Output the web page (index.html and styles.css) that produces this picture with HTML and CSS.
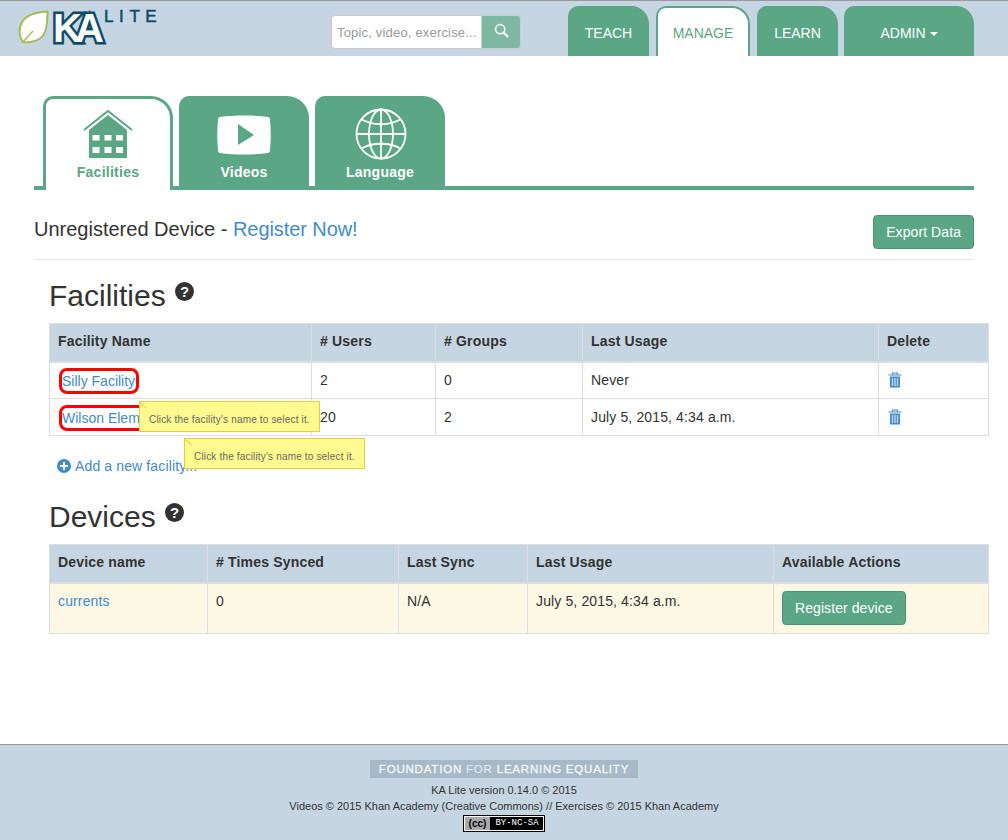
FILE: index.html
```html
<!DOCTYPE html>
<html lang="en">
<head>
    <meta charset="UTF-8">
    <title>Facilities - KA Lite</title>
    <link rel="stylesheet" href="styles.css">
</head>
<body>

    <header class="topbar">
        <a class="logo" href="#">
            <svg class="leaf" width="31" height="34" viewBox="0 0 31 34">
                <path d="M29.5 1.5 C20 2 9 4 4 12 C0 19 1 27 5 32 C12 33 22 31 26 24 C30 17 29 8 29.5 1.5 Z" fill="#fff" stroke="#a4bd5a" stroke-width="2"/>
                <path d="M5 32 L15 21" fill="none" stroke="#a4bd5a" stroke-width="1.5"/>
            </svg>
            <span class="logo-ka">KA</span>
            <span class="logo-lite">LITE</span>
        </a>
        <form class="search">
            <input class="search-input" type="text" placeholder="Topic, video, exercise...">
            <button class="search-btn" type="button">
                <svg width="15" height="15" viewBox="0 0 15 15">
                    <circle cx="6.2" cy="6.2" r="4.6" fill="none" stroke="#fff" stroke-width="1.500"/>
                    <path d="M9.5 9.5 L13.5 13.5" stroke="#fff" stroke-width="2" stroke-linecap="round"/>
                </svg>
            </button>
        </form>
        <nav class="nav">
            <a class="nav-tab nav-teach" href="#">TEACH</a>
            <a class="nav-tab nav-manage active" href="#">MANAGE</a>
            <a class="nav-tab nav-learn" href="#">LEARN</a>
            <a class="nav-tab nav-admin" href="#">ADMIN <span class="caret"></span></a>
        </nav>
    </header>

    <main class="container">
        <div class="subtabs">
            <a class="subtab active" href="#">
                <svg width="50" height="50" viewBox="0 0 50 50">
                    <path d="M1 20 L25 1 L49 20" fill="none" stroke="#5aa685" stroke-width="2"/>
                    <path d="M6 20 L25 5 L44 20 V48 H6 Z" fill="#5aa685"/>
                    <g fill="#fff">
                        <rect x="9.500" y="25" width="7" height="5.500"/>
                        <rect x="21.500" y="25" width="7" height="5.500"/>
                        <rect x="33" y="25" width="7" height="5.500"/>
                        <rect x="9.500" y="37" width="7" height="6"/>
                        <rect x="21.500" y="37" width="7" height="6"/>
                        <rect x="33" y="37" width="7" height="6"/>
                    </g>
                </svg>
                <span>Facilities</span>
            </a>
            <a class="subtab" href="#">
                <svg width="54" height="50" viewBox="0 0 54 50">
                    <path d="M3 7 C18 5 36 5 51 7 C52 7 53 8 53 10 C54 20 54 30 53 40 C53 42 52 43 51 43 C36 45 18 45 3 43 C2 43 1 42 1 40 C0 30 0 20 1 10 C1 8 2 7 3 7 Z" fill="#fff"/>
                    <path d="M21 14 L37 25 L21 35 Z" fill="#5aa685"/>
                </svg>
                <span>Videos</span>
            </a>
            <a class="subtab" href="#">
                <svg class="globe" width="52" height="52" viewBox="0 0 52 52" fill="none" stroke="#fff" stroke-width="1.800">
                    <circle cx="26" cy="26" r="24.500"/>
                    <path d="M26 1.500 V50.500 M1.500 26 H50.500"/>
                    <ellipse cx="26" cy="26" rx="12" ry="24.500"/>
                    <path d="M6 11 C17 18 35 18 46 11 M6 41 C17 34 35 34 46 41"/>
                </svg>
                <span>Language</span>
            </a>
        </div>

        <div class="status-row">
            <h4 class="status">Unregistered Device - <a class="status-link" href="#">Register Now!</a></h4>
            <a class="btn" href="#">Export Data</a>
        </div>

        <section class="panel">
            <h2 class="title">Facilities <span class="help">?</span></h2>
            <table class="data-table">
                <colgroup>
                    <col class="col-f1"><col class="col-f2"><col class="col-f3"><col class="col-f4"><col>
                </colgroup>
                <thead>
                    <tr><th>Facility Name</th><th># Users</th><th># Groups</th><th>Last Usage</th><th>Delete</th></tr>
                </thead>
                <tbody>
                    <tr>
                        <td><a class="flagged" href="#">Silly Facility</a></td>
                        <td>2</td>
                        <td>0</td>
                        <td>Never</td>
                        <td>
                            <svg class="trash" width="14" height="16" viewBox="0 0 14 16">
                                <path d="M0.500 3 H13.500 M4.500 3 V1 H9.500 V3" fill="none" stroke="#428bca" stroke-width="1.200"/>
                                <path d="M2 4.500 H12 V15.500 H2 Z" fill="#428bca"/>
                                <path d="M4.500 6 V14 M7 6 V14 M9.500 6 V14" stroke="#c5dcf0" stroke-width="1.300"/>
                            </svg>
                        </td>
                    </tr>
                    <tr>
                        <td><a class="flagged" href="#">Wilson Elementary</a></td>
                        <td>20</td>
                        <td>2</td>
                        <td>July 5, 2015, 4:34 a.m.</td>
                        <td>
                            <svg class="trash" width="14" height="16" viewBox="0 0 14 16">
                                <path d="M0.500 3 H13.500 M4.500 3 V1 H9.500 V3" fill="none" stroke="#428bca" stroke-width="1.200"/>
                                <path d="M2 4.500 H12 V15.500 H2 Z" fill="#428bca"/>
                                <path d="M4.500 6 V14 M7 6 V14 M9.500 6 V14" stroke="#c5dcf0" stroke-width="1.300"/>
                            </svg>
                        </td>
                    </tr>
                </tbody>
            </table>
            <p class="add-line">
                <a href="#"><span class="plus"></span>Add a new facility...</a>
            </p>
            <div class="tip tip-one">Click the facility's name to select it.</div>
            <div class="tip tip-two">Click the facility's name to select it.</div>

            <h2 class="title title-devices">Devices <span class="help">?</span></h2>
            <table class="data-table devices">
                <colgroup>
                    <col class="col-d1"><col class="col-d2"><col class="col-d3"><col class="col-d4"><col>
                </colgroup>
                <thead>
                    <tr><th>Device name</th><th># Times Synced</th><th>Last Sync</th><th>Last Usage</th><th>Available Actions</th></tr>
                </thead>
                <tbody>
                    <tr>
                        <td><a href="#">currents</a></td>
                        <td>0</td>
                        <td>N/A</td>
                        <td>July 5, 2015, 4:34 a.m.</td>
                        <td><a class="btn" href="#">Register device</a></td>
                    </tr>
                </tbody>
            </table>
        </section>
    </main>

    <footer class="footer">
        <div class="foundation"><b>FOUNDATION</b> FOR <b>LEARNING EQUALITY</b></div>
        <p>KA Lite version 0.14.0 © 2015</p>
        <p>Videos © 2015 Khan Academy (Creative Commons) // Exercises © 2015 Khan Academy</p>
        <div class="cc"><span class="cc-mark">(cc)</span><span class="cc-text">BY-NC-SA</span></div>
    </footer>

</body>
</html>
```

FILE: styles.css
```css
* {
    box-sizing: border-box;
}
body {
    margin: 0;
    font-family: "Liberation Sans", Arial, sans-serif;
    font-size: 14px;
    line-height: 20px;
    color: #333;
    background-color: #fff;
}
a {
    color: #428bca;
    text-decoration: none;
}

/* top bar */
.topbar {
    position: relative;
    display: flex;
    height: 56px;
    background-color: #c5d6e2;
    border-top: 1px solid #999;
}
.logo {
    position: relative;
    display: block;
    width: 331px;
    flex: none;
}
.leaf {
    position: absolute;
    left: 18px;
    top: 9px;
}
.logo-ka {
    position: absolute;
    left: 53px;
    top: 7px;
    font-size: 40px;
    line-height: 40px;
    font-weight: bold;
    letter-spacing: -7px;
    color: #fff;
    -webkit-text-stroke: 5px #0f4a66;
    paint-order: stroke fill;
}
.logo-lite {
    position: absolute;
    left: 104px;
    top: 7px;
    font-size: 17px;
    line-height: 18px;
    letter-spacing: 5.600px;
    color: #0f4a66;
    -webkit-text-stroke: 0.5px #0f4a66;
}
.search {
    display: flex;
    width: 190px;
    height: 34px;
    margin-top: 14px;
    flex: none;
}
.search-input {
    width: 150px;
    border: 1px solid #ccc;
    border-right: none;
    border-radius: 4px 0 0 4px;
    padding: 0 5px;
    font-family: inherit;
    font-size: 13px;
    letter-spacing: 0.18px;
    background-color: #fff;
}
.search-input::placeholder {
    color: #999;
}
.search-btn {
    width: 40px;
    border: 1px solid #c0d5d0;
    border-radius: 0 4px 4px 0;
    background-color: #7fb8a2;
    padding: 0;
}
.nav {
    display: flex;
    gap: 7px;
    margin-left: 47px;
    padding-top: 5px;
}
.nav-tab {
    display: block;
    height: 50px;
    padding-top: 17px;
    text-align: center;
    color: #fff;
    background-color: #5aa685;
    border-radius: 0 18px 0 0;
    border-top-left-radius: 10px;
}
.nav-teach, .nav-learn {
    width: 81px;
}
.nav-manage {
    width: 94px;
}
.nav-admin {
    width: 130px;
    margin-left: -1px;
}
.nav-tab.active {
    background-color: #fff;
    color: #5aa685;
    border: 2px solid #5aa685;
    border-bottom: none;
    padding-top: 15px;
}
.caret {
    display: inline-block;
    vertical-align: middle;
    border-top: 4px solid #fff;
    border-left: 4px solid transparent;
    border-right: 4px solid transparent;
}

/* page */
.container {
    width: 940px;
    height: 688px;
    margin: 0 auto;
    padding-top: 40px;
}
.subtabs {
    display: flex;
    gap: 6px;
    height: 94px;
    padding-left: 9px;
    border-bottom: 4px solid #5aa685;
}
.subtab {
    display: flex;
    flex-direction: column;
    align-items: center;
    justify-content: flex-end;
    width: 130px;
    height: 90px;
    padding-bottom: 4px;
    font-weight: bold;
    letter-spacing: 0.25px;
    color: #fff;
    background-color: #5aa685;
    border-radius: 10px 22px 0 0;
}
.subtab svg {
    margin-bottom: 2px;
}
.subtab .globe {
    margin-left: 1px;
}
.subtab.active {
    height: 94px;
    padding-bottom: 8px;
    color: #5aa685;
    background-color: #fff;
    border: 3px solid #5aa685;
    border-bottom: none;
}
.status-row {
    display: flex;
    justify-content: space-between;
    align-items: flex-start;
    height: 70px;
    padding-top: 25px;
    border-bottom: 1px solid #e5e5e5;
}
.status {
    margin: 0;
    font-size: 20px;
    font-weight: normal;
    line-height: 28px;
}
.status-link {
    letter-spacing: -0.08px;
}
.btn {
    display: inline-block;
    padding: 6px 12px;
    letter-spacing: 0.08px;
    color: #fff;
    background-color: #5aa685;
    border: 1px solid #4a9674;
    border-radius: 4px;
}
.panel {
    position: relative;
    width: 940px;
    margin-left: 15px;
}
.title {
    margin: 0;
    padding-top: 16px;
    height: 63px;
    font-size: 30px;
    line-height: 40px;
    font-weight: normal;
}
.title-devices {
    height: 64px;
    padding-top: 17px;
}
.help {
    display: inline-block;
    width: 19px;
    height: 19px;
    margin-left: 1px;
    border-radius: 50%;
    background-color: #333;
    color: #fff;
    font-size: 15px;
    font-weight: bold;
    line-height: 19px;
    text-align: center;
    vertical-align: 9px;
}

/* tables */
.data-table {
    width: 940px;
    border-collapse: collapse;
    table-layout: fixed;
    letter-spacing: 0.13px;
}
.data-table th, .data-table td {
    padding: 7px 8px;
    text-align: left;
    border: 1px solid #ddd;
    height: 37px;
}
.data-table th {
    height: 38px;
    padding: 6px 8px 8px;
    font-weight: bold;
    letter-spacing: 0.18px;
    background-color: #c5d6e2;
    border-bottom-width: 2px;
}
.col-f1 { width: 262px; }
.col-f2 { width: 124px; }
.col-f3 { width: 147px; }
.col-f4 { width: 296px; }
.col-d1 { width: 158px; }
.col-d2 { width: 191px; }
.col-d3 { width: 129px; }
.col-d4 { width: 246px; }
.devices td {
    height: 51px;
    vertical-align: top;
    background-color: #fcf8e3;
}
.flagged {
    display: inline-block;
    padding: 0 1px 0 0;
    margin: -2px 0 -3px 1px;
    border: 3px solid #f00;
    border-radius: 8px;
    letter-spacing: 0;
    line-height: 20px;
    vertical-align: top;
}
.trash {
    display: block;
    margin-left: 1px;
}
.add-line {
    margin: 0;
    padding: 20px 0 0 8px;
    height: 44px;
    letter-spacing: 0.13px;
}
.plus {
    position: relative;
    display: inline-block;
    width: 14px;
    height: 14px;
    margin-right: 4px;
    vertical-align: -2px;
    border-radius: 50%;
    background-color: #428bca;
}
.plus::before {
    content: "";
    position: absolute;
    left: 3px;
    top: 6px;
    width: 8px;
    height: 2px;
    background-color: #fff;
}
.plus::after {
    content: "";
    position: absolute;
    left: 6px;
    top: 3px;
    width: 2px;
    height: 8px;
    background-color: #fff;
}

/* tooltips */
.tip {
    position: absolute;
    width: 181px;
    height: 31px;
    padding: 10px 0 0 9px;
    font-size: 10px;
    line-height: 16px;
    letter-spacing: 0.17px;
    color: #666;
    background-color: #fffb8e;
    border: 1px solid #ebcb3c;
    white-space: nowrap;
}
.tip::before {
    content: "";
    position: absolute;
    left: 0;
    top: 0;
    width: 9px;
    height: 1px;
    background-color: #ebcb3c;
    transform: rotate(40deg);
    transform-origin: left top;
}
.tip-one {
    left: 90px;
    top: 141px;
}
.tip-two {
    left: 135px;
    top: 178px;
}

/* footer */
.footer {
    height: 96px;
    padding-top: 15px;
    font-size: 11px;
    line-height: 16px;
    text-align: center;
    color: #333;
    background-color: #c5d6e2;
    border-top: 1px solid #999;
}
.footer p {
    margin: 0;
}
.foundation {
    width: 268px;
    height: 18px;
    margin: 0 auto 4px;
    font-size: 11.500px;
    line-height: 18px;
    letter-spacing: 0.8px;
    color: #e8eef3;
    background-color: #a7b9c7;
    white-space: nowrap;
}
.foundation b {
    font-weight: normal;
    color: #f5f8fa;
    -webkit-text-stroke: 0.3px #f5f8fa;
}
.cc {
    display: flex;
    width: 82px;
    height: 17px;
    margin: 1px auto 0;
    border: 1px solid #000;
    background-color: #000;
    outline: 1px solid #fff;
    outline-offset: -2px;
}
.cc-mark {
    width: 25px;
    font-size: 10px;
    line-height: 13px;
    font-weight: bold;
    color: #000;
    background-color: #aaa;
    margin: 1px 0 1px 1px;
}
.cc-text {
    flex: 1;
    font-family: "Liberation Mono", monospace;
    font-size: 9px;
    line-height: 15px;
    color: #fff;
    white-space: nowrap;
}
```
